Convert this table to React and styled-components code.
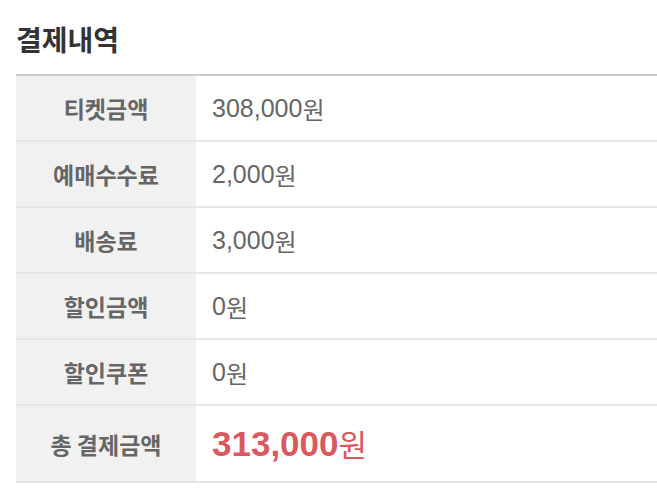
import React from "react";
import styled, { createGlobalStyle } from "styled-components";

const rows = [
  { label: "티켓금액", value: "308,000" },
  { label: "예매수수료", value: "2,000" },
  { label: "배송료", value: "3,000" },
  { label: "할인금액", value: "0" },
  { label: "할인쿠폰", value: "0" },
];

const App = () => {
  return (
    <>
      <GlobalStyle />
      <Page>
        <Title>결제내역</Title>
        <Table>
          {rows.map((row) => (
            <Row key={row.label}>
              <Label>{row.label}</Label>
              <Value>
                {row.value}
                <Unit>원</Unit>
              </Value>
            </Row>
          ))}
          <Row $total>
            <Label>총 결제금액</Label>
            <Value $total>
              313,000<Unit $total>원</Unit>
            </Value>
          </Row>
        </Table>
      </Page>
    </>
  );
};

const GlobalStyle = createGlobalStyle`
  body {
    margin: 0;
    background: #fff;
    font-family: "Noto Sans CJK KR", "Noto Sans", sans-serif;
  }
`;

const Page = styled.div`
  padding-left: 16px;
`;

const Title = styled.h2`
  margin: 22px 0 18px;
  font-size: 28px;
  line-height: 34px;
  font-weight: bold;
  color: #333;
`;

const Table = styled.div`
  border-top: 2px solid #cccccc;
`;

const Row = styled.div`
  display: grid;
  grid-template-columns: 180px 1fr;
  height: ${(p) => (p.$total ? "75px" : "64px")};
  border-bottom: 2px solid #e5e5e5;
`;

const Label = styled.div`
  display: flex;
  align-items: center;
  justify-content: center;
  background: #f1f1f1;
  font-size: 23px;
  font-weight: bold;
  color: #666;
`;

const Value = styled.div`
  display: flex;
  align-items: center;
  padding-left: 16px;
  font-family: "Liberation Sans", "Noto Sans CJK KR", sans-serif;
  font-size: ${(p) => (p.$total ? "35px" : "25px")};
  font-weight: ${(p) => (p.$total ? "bold" : "normal")};
  color: ${(p) => (p.$total ? "#d85a5e" : "#666")};
`;

const Unit = styled.span`
  font-family: "Noto Sans CJK KR", sans-serif;
  font-weight: normal;
  font-size: ${(p) => (p.$total ? "31px" : "24px")};
`;

export default App;
